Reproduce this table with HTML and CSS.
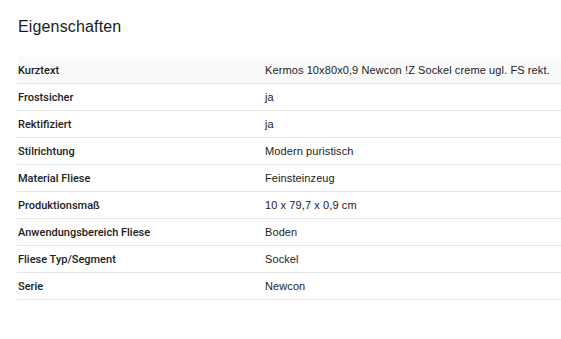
FILE: index.html
```html
<!DOCTYPE html>
<html lang="de">
<head>
<meta charset="utf-8">
<link rel="stylesheet" href="styles.css">
</head>
<body>
<section class="props">
  <h2 class="props-title">Eigenschaften</h2>
  <div class="props-table">
    <div class="row row-first"><div class="label">Kurztext</div><div class="value">Kermos 10x80x0,9 Newcon !Z Sockel creme ugl. FS rekt.</div></div>
    <div class="row"><div class="label">Frostsicher</div><div class="value">ja</div></div>
    <div class="row"><div class="label">Rektifiziert</div><div class="value">ja</div></div>
    <div class="row"><div class="label">Stilrichtung</div><div class="value">Modern puristisch</div></div>
    <div class="row"><div class="label">Material Fliese</div><div class="value">Feinsteinzeug</div></div>
    <div class="row"><div class="label">Produktionsmaß</div><div class="value">10 x 79,7 x 0,9 cm</div></div>
    <div class="row"><div class="label">Anwendungsbereich Fliese</div><div class="value">Boden</div></div>
    <div class="row"><div class="label">Fliese Typ/Segment</div><div class="value">Sockel</div></div>
    <div class="row"><div class="label">Serie</div><div class="value">Newcon</div></div>
  </div>
</section>
</body>
</html>
```
FILE: styles.css
```css
html, body {
  margin: 0;
  padding: 0;
  background: #ffffff;
}
body {
  font-family: "Liberation Sans", Arial, sans-serif;
  color: #1a1a1a;
}
.props {
  padding: 16px 0 0 17px;
}
.props-title {
  margin: 0 0 0 1px;
  font-size: 16px;
  font-weight: 400;
  line-height: 22px;
  letter-spacing: 0.15px;
  color: #1a1a1a;
}
.props-table {
  margin-top: 19px;
}
.row {
  display: grid;
  grid-template-columns: 248px 1fr;
  height: 26px;
  align-items: center;
  border-bottom: 1px solid #e6e6e6;
  font-size: 11px;
}
.row-first {
  background: #fafafa;
}
.label {
  padding-left: 1px;
  font-family: Roboto, "Liberation Sans", sans-serif;
  font-weight: 500;
  color: #222;
}
.value {
  color: #222;
  letter-spacing: 0.1px;
}
```
